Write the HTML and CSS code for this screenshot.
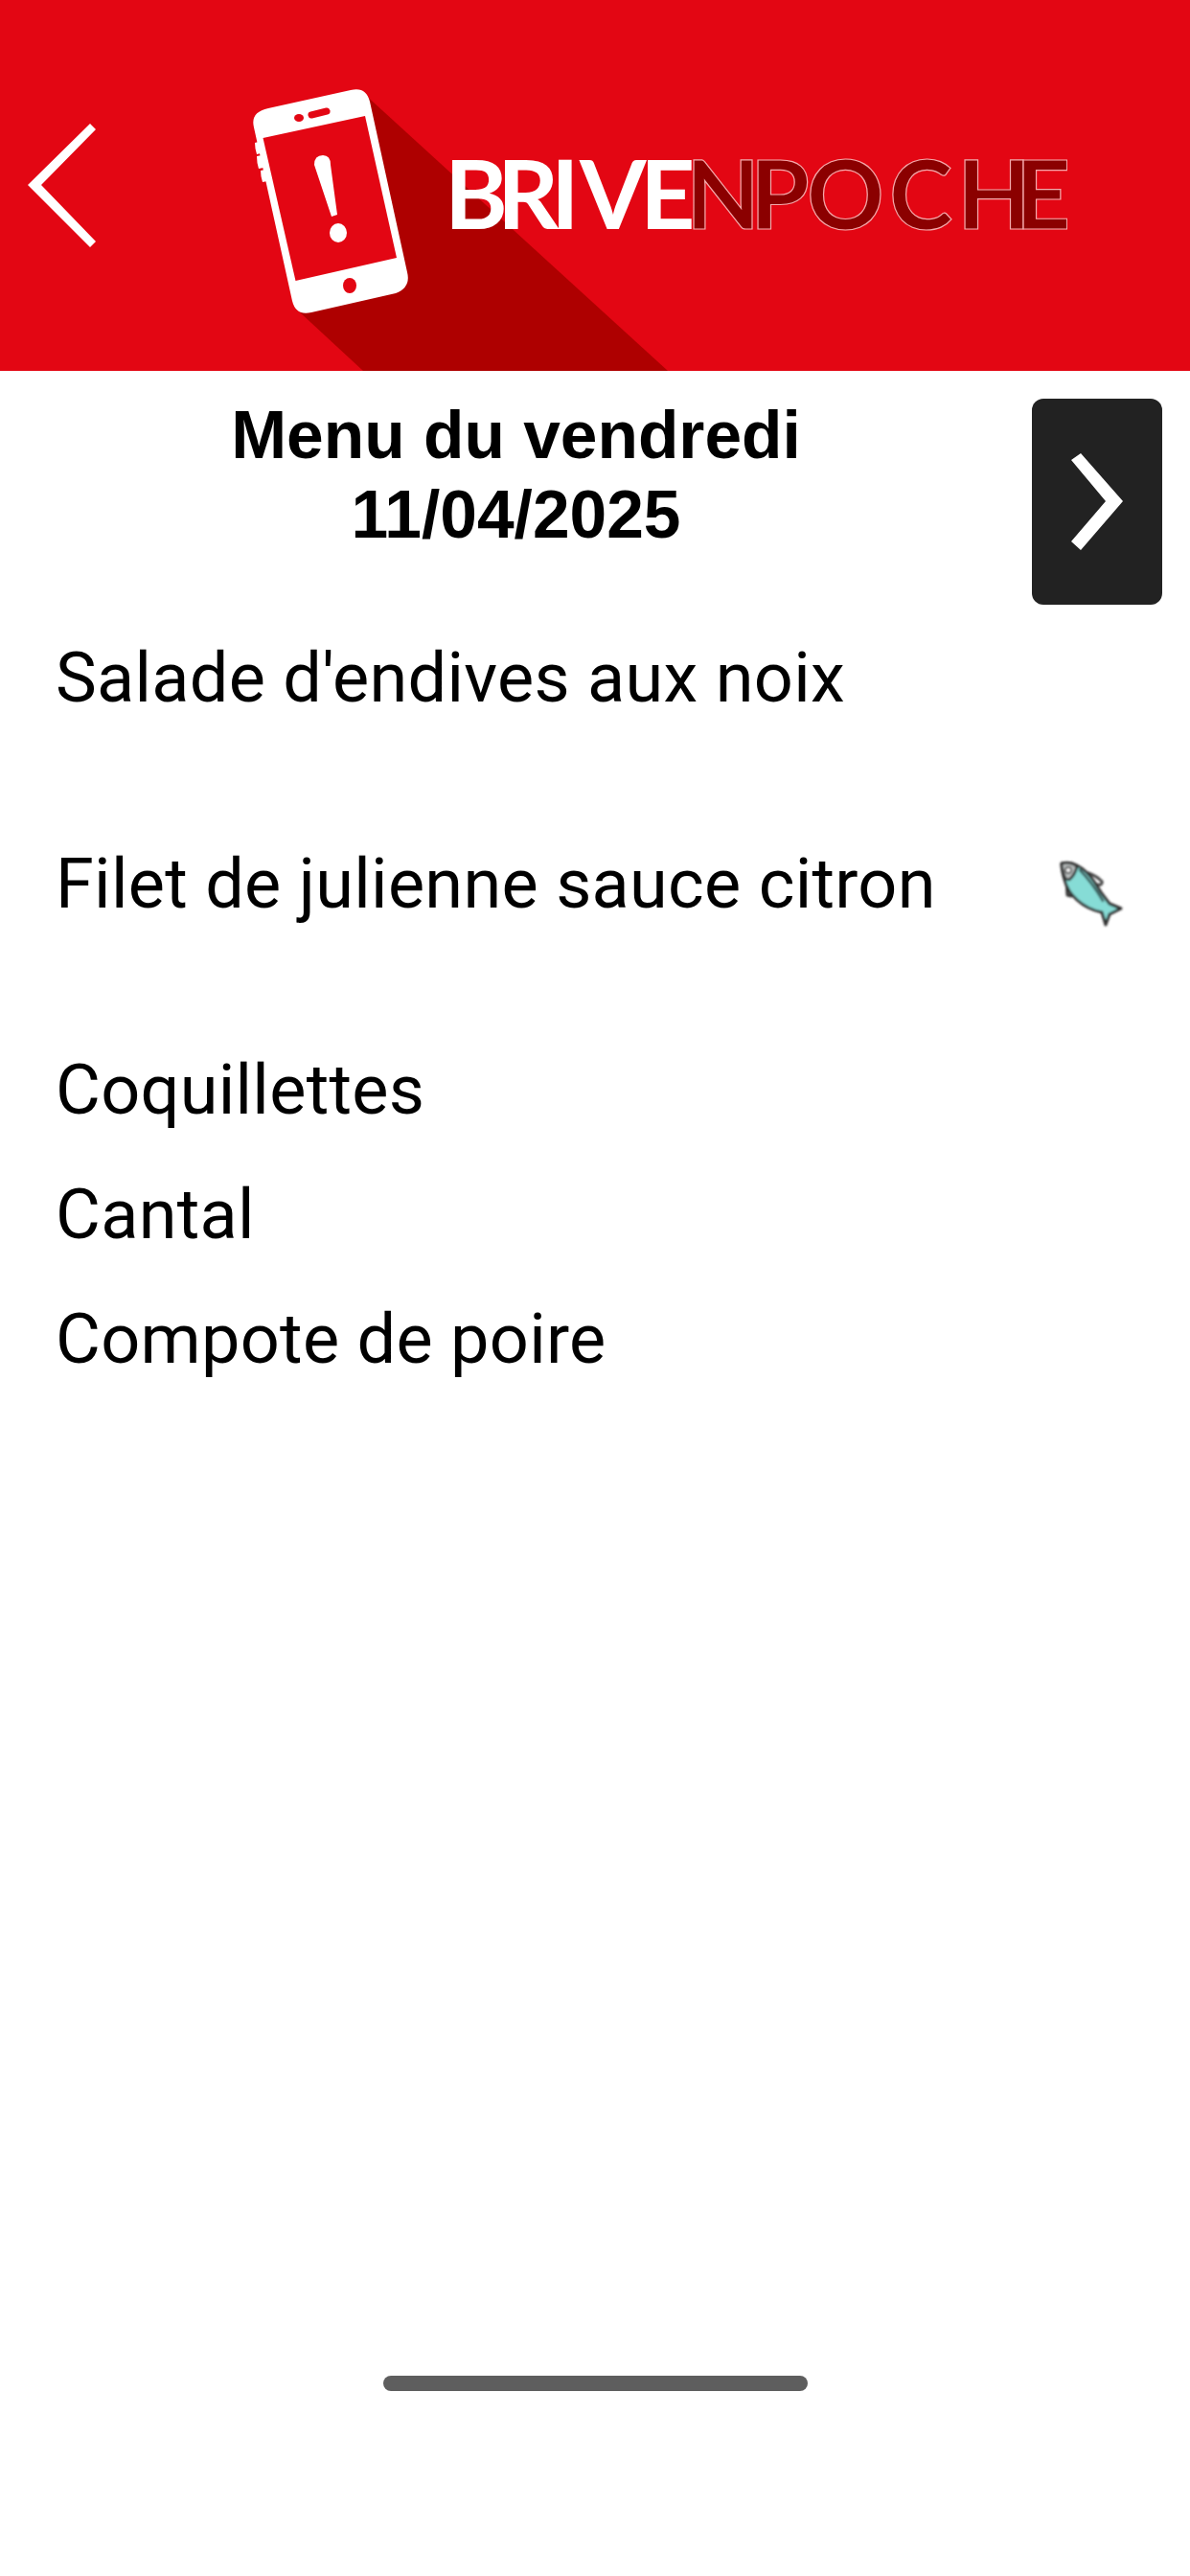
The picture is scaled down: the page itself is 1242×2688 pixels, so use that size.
FILE: index.html
```html
<!DOCTYPE html>
<html lang="fr">
<head>
<meta charset="utf-8">
<title>Menu du vendredi</title>
<link rel="stylesheet" href="styles.css">
</head>
<body>
<header class="app-header">
  <a class="back" href="#" aria-label="Retour">
    <svg class="back-icon" viewBox="0 0 71 129"><polygon points="65,0 71,6 14,64 71,123 65,129 0,64" fill="#fff"/></svg>
  </a>
  <svg class="logo" viewBox="264 0 850 387" role="img" aria-label="Brive en poche">
    <polygon points="378,96 697,387 379,387 312,325" fill="#ae0000"/>
    <path fill="#fff" d="M280,113 L366,94 Q382,90 386,106 L425,284 Q429,300 413,306 L325,326 Q309,330 305,314 L265,133 Q261,117 280,113 Z"/>
    <polygon points="274.5,144 381,121 414,269 308.5,293" fill="#e30613"/>
    <path fill="#fff" d="M266,149 l4,-1 l2,12 l-4,1 q-2,-6 -2,-12 Z M268,163 l5,-1 l2,13 l-5,1 q-2,-6 -2,-13 Z M272,178 l5,-1 l2,12 l-5,1 q-2,-6 -2,-12 Z"/>
    <ellipse cx="312" cy="123" rx="5" ry="4" fill="#e30613"/>
    <line x1="325" y1="120" x2="341" y2="116" stroke="#e30613" stroke-width="7" stroke-linecap="round"/>
    <ellipse cx="365" cy="298" rx="7" ry="8" fill="#e30613"/>
    <path fill="#fff" d="M328,172 Q328,162 337,162 Q345,162 345,172 L352,224 L346,226 Z"/>
    <ellipse cx="353" cy="243" rx="9" ry="10" fill="#fff"/>
    <text class="logo-brive" y="239" x="464 519 575 605 668">BRIVE</text>
    <text class="logo-npoche" y="239" x="716 783 842 928 999 1060">NPOCHE</text>
  </svg>
</header>
<main class="content">
  <section class="day-head">
    <h1 class="day-title">Menu du vendredi<br>11/04/2025</h1>
    <a class="next" href="#" aria-label="Suivant">
      <svg class="next-icon" viewBox="0 0 54 101"><polygon points="10,0 54,50 10,101 0,92 36,50 0,7" fill="#fff"/></svg>
    </a>
  </section>
  <ul class="menu">
    <li class="dish dish-tall">Salade d'endives aux noix</li>
    <li class="dish dish-tall">Filet de julienne sauce citron
      <svg class="fish" viewBox="0 0 110 100" aria-label="Poisson">
        <defs><filter id="soft" x="-10%" y="-10%" width="120%" height="120%"><feGaussianBlur stdDeviation="0.9"/></filter></defs>
        <g filter="url(#soft)" stroke-linejoin="round" stroke-linecap="round">
          <path d="M56,31 Q64,34 68,38 Q72,40 69,43 Q65,44 62,42" fill="none" stroke="#444" stroke-width="3"/>
          <path d="M33,38 L34,54 L38,55 L46,48 Z" fill="#8f9494" stroke="#333" stroke-width="3"/>
          <path d="M28,21 Q37,19 44,23 Q54,28 62,40 Q69,52 78,63 L90,68 L78,74 L74,85 L70,72 Q55,69 44,59 Q34,50 31,38 Q28,28 28,21 Z" fill="#86dcd6" stroke="#333" stroke-width="3"/>
          <path d="M28,21 Q37,19 44,24 Q42,33 36,38 L32,37 Q28,28 28,21 Z" fill="#b9bebe" stroke="#333" stroke-width="2.8"/>
          <circle cx="35" cy="28" r="3" fill="#fff" stroke="#555" stroke-width="1.8"/>
          <path d="M47,28 Q59,40 71,60" fill="none" stroke="#2f4a4a" stroke-width="2.4"/>
        </g>
      </svg>
    </li>
    <li class="dish">Coquillettes</li>
    <li class="dish">Cantal</li>
    <li class="dish">Compote de poire</li>
  </ul>
</main>
<footer class="home-bar"><span class="home-indicator"></span></footer>
</body>
</html>
```
FILE: styles.css
```css
* { box-sizing: border-box; }
html, body { margin: 0; padding: 0; }
body {
  width: 1242px;
  height: 2688px;
  display: flex;
  flex-direction: column;
  background: #fff;
  color: #000;
  font-family: "Liberation Sans", Arial, sans-serif;
  overflow: hidden;
}
.app-header {
  height: 387px;
  flex: none;
  background: #e30613;
  display: flex;
  align-items: flex-start;
  overflow: hidden;
}
.back { display: block; margin: 129px 0 0 29px; line-height: 0; }
.back-icon { width: 71px; height: 129px; display: block; }
.logo { width: 850px; height: 387px; margin-left: 164px; flex: none; display: block; }
.logo text { font-family: Lato, "Liberation Sans", sans-serif; font-size: 100px; font-weight: 700; }
.logo-brive { fill: #fff; }
.logo-npoche { fill: #8b0000; stroke: #f4a9ab; stroke-width: 1.2px; }
.content { flex: 1; }
.day-head { display: flex; align-items: flex-start; }
.day-title {
  flex: 1;
  margin: 0;
  padding-top: 26px;
  font-size: 69.5px;
  line-height: 83px;
  font-weight: 700;
  text-align: center;
}
.next {
  flex: none;
  width: 136px;
  height: 215px;
  margin: 29px 29px 0 0;
  background: #222;
  border-radius: 12px;
  display: flex;
  align-items: center;
  justify-content: center;
}
.next-icon { width: 54px; height: 101px; display: block; }
.menu {
  list-style: none;
  margin: 0;
  padding: 12px 0 0 58px;
  font-family: Roboto, "Liberation Sans", sans-serif;
  font-weight: 400;
  font-size: 72px;
  letter-spacing: 0.3px;
}
.dish {
  height: 130px;
  line-height: 130px;
  display: flex;
  justify-content: space-between;
}
.dish-tall { height: 215px; }
.fish { width: 110px; height: 100px; margin: 22px 52px 0 0; flex: none; }
.home-bar {
  flex: none;
  height: 209px;
  display: flex;
  justify-content: center;
}
.home-indicator {
  width: 443px;
  height: 16px;
  border-radius: 8px;
  background: #5e5e5e;
}
```
